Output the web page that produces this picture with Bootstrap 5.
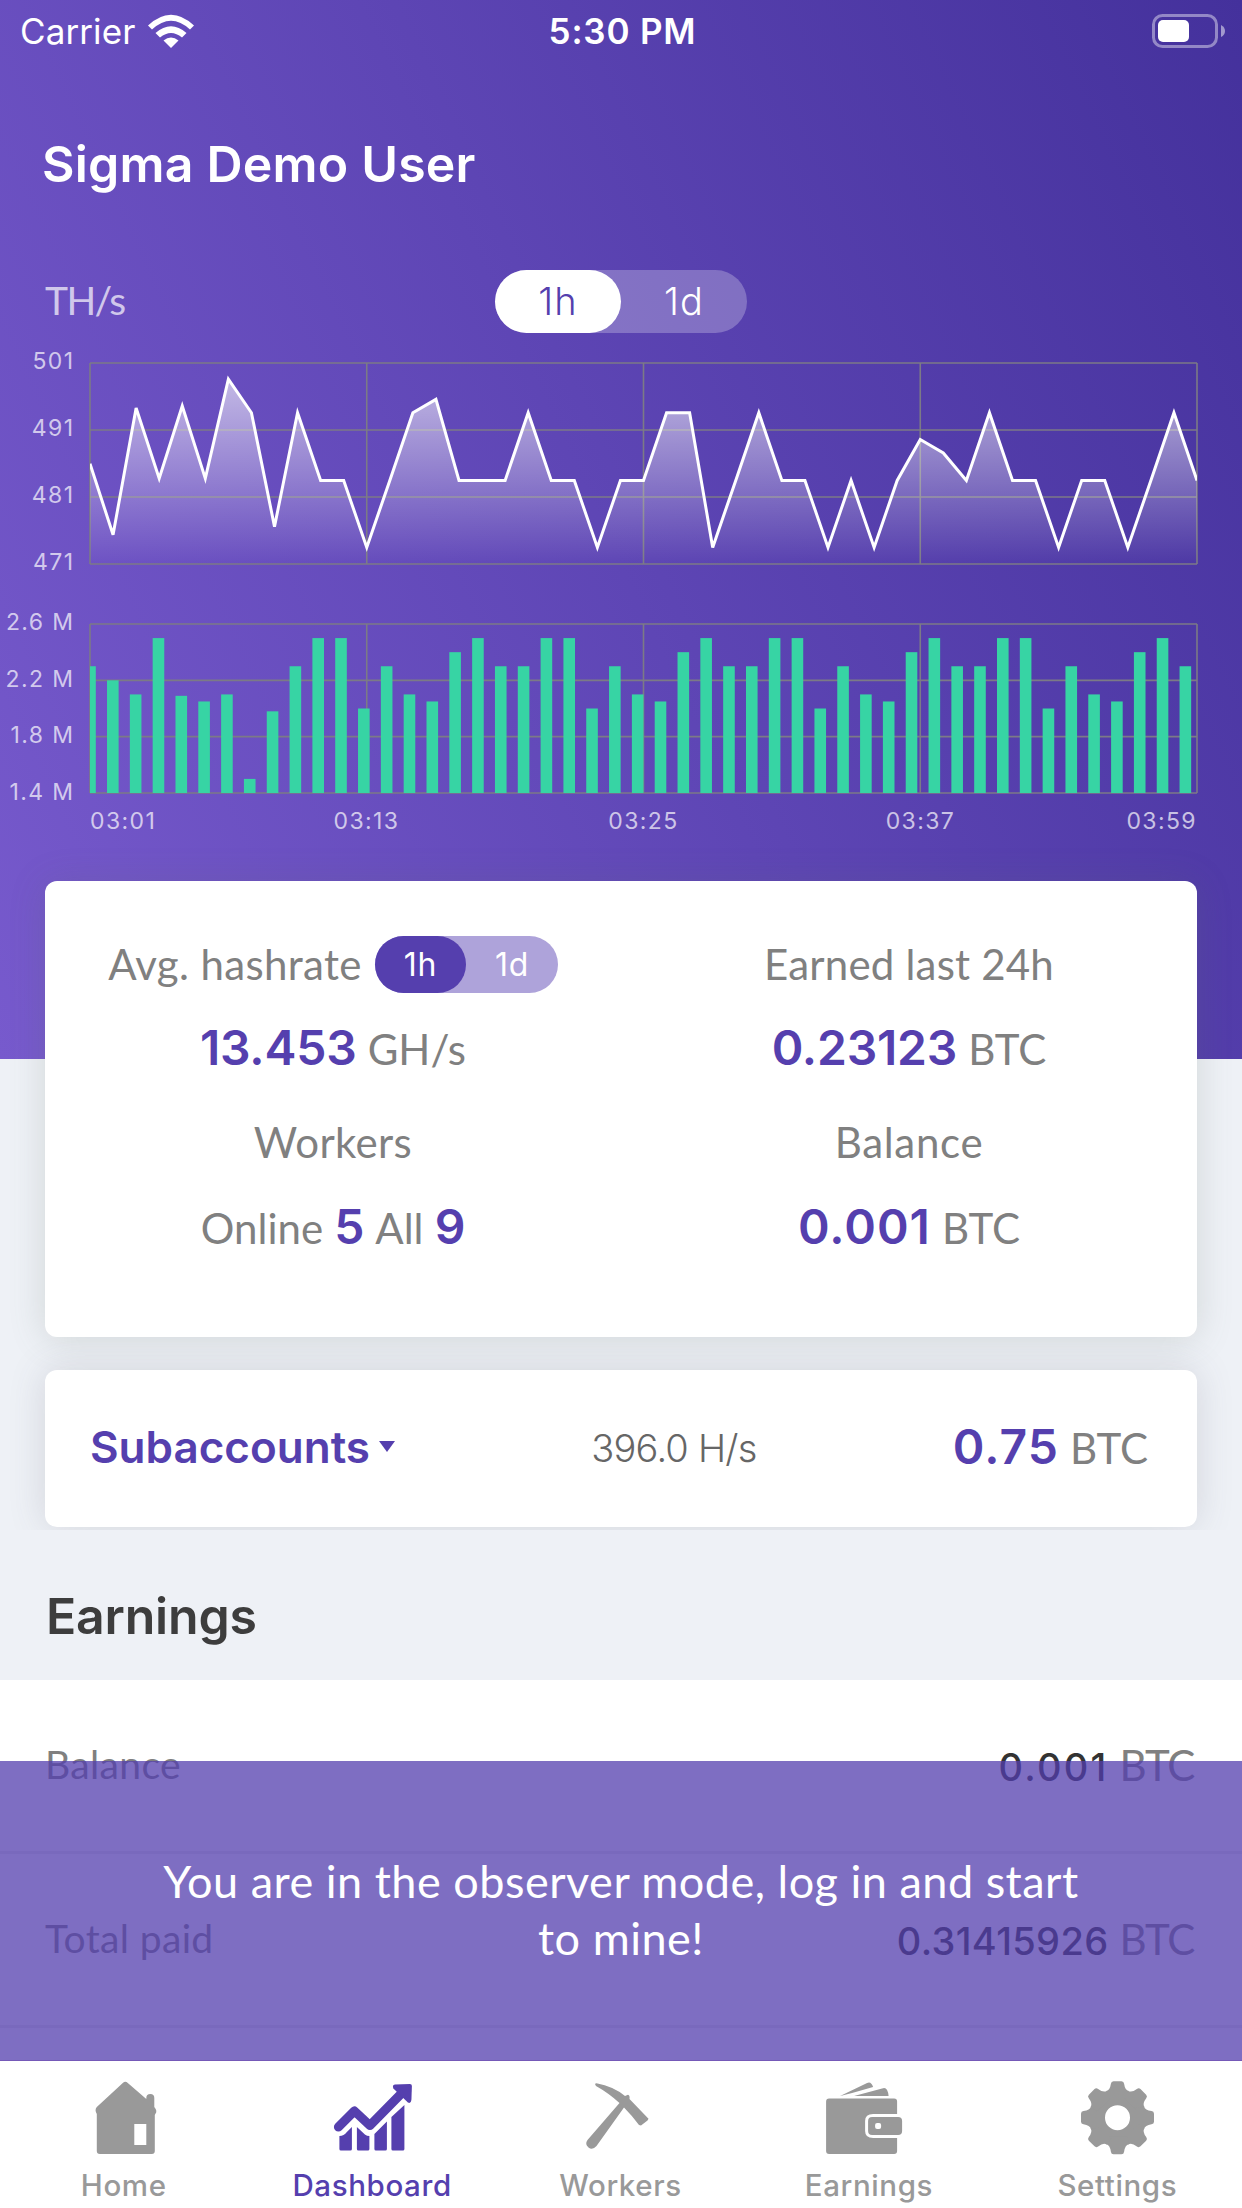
<!DOCTYPE html>
<html lang="en">
<head>
<meta charset="utf-8">
<meta name="viewport" content="width=device-width, initial-scale=1">
<title>Dashboard</title>
<link href="https://cdn.jsdelivr.net/npm/bootstrap@5.3.0/dist/css/bootstrap.min.css" rel="stylesheet">
<style>
  :root { --brand:#553fae; --muted:#808080; }
  html, body { height:2208px; overflow:hidden; }
  body { background:#eef1f6; font-family:Lato, sans-serif; color:var(--muted); font-size:42px; line-height:60px; letter-spacing:.35px; }
  .sf { font-family:Inter, sans-serif; }

  .hero { height:1059px; background:linear-gradient(65deg,#775acd,#44319c); }
  .statusbar { height:62px; padding:0 17px 0 20px; font-size:35px; line-height:62px; }
  .carrier { letter-spacing:.1px; margin-right:12px; }
  .clock { font-weight:600; letter-spacing:.8px; }
  .user-title { margin:67px 0 0 42px; font:600 50px/70px Inter, sans-serif; letter-spacing:.2px; }
  .chart-head { margin-top:71px; height:63px; padding:0 45px; }
  .unit { font-size:39px; line-height:60px; letter-spacing:-1.6px; color:rgba(255,255,255,.7); }
  .seg { border-radius:50rem; display:flex; font-family:Inter, sans-serif; }
  .seg span { flex:1; border-radius:50rem; text-align:center; }
  .seg-lg { width:252px; height:63px; background:rgba(255,255,255,.25); font-size:38px; line-height:63px; letter-spacing:1px; font-weight:350; }
  .seg-lg .on { background:#fff; color:var(--brand); }
  .seg-sm { width:183px; height:57px; background:#aea3da; color:#fff; font-size:32px; line-height:57px; letter-spacing:.8px; margin-left:13px; }
  .seg-sm .on { background:var(--brand); }
  .charts { display:block; margin-top:7px; }
  .charts text { font:400 23px Inter, sans-serif; letter-spacing:1.4px; fill:#fff; fill-opacity:.7; }

  .panel { margin:0 45px; background:#fff; border-radius:12px; position:relative; }
  .stats { height:456px; margin-top:-178px; padding-top:55px; box-shadow:0 2px 36px rgba(95,110,100,.2); }
  .num { font:600 48px/60px Inter, sans-serif; color:var(--brand); letter-spacing:-.2px; }
  .num.airy { letter-spacing:1px; }
  .suffix { line-height:1; letter-spacing:0; }
  .head-row { height:57px; }
  .head-row .lbl { margin-top:-2px; }
  .val { height:60px; margin-top:25px; }
  .lbl2 { margin-top:34px; }
  .val2 { height:60px; margin-top:25px; }
  .wide { letter-spacing:.7px; }
  .tight { letter-spacing:.2px; }

  .subs { height:157px; margin-top:33px; padding:0 49px 2px 45px; box-shadow:0 0 36px rgba(80,80,95,.17); clip-path:inset(-33px -60px -3px -60px); }
  .subs-name { font:600 44px/60px Inter, sans-serif; color:var(--brand); letter-spacing:0; margin-bottom:2px; }
  .caret-tri { border:8px solid transparent; border-top:11px solid var(--brand); border-bottom:0; margin-left:9px; }
  .rate { font:350 38px/60px Inter, sans-serif; color:#666; letter-spacing:-.8px; }

  .sec-title { height:153px; padding:59px 46px 0; margin:0; font:600 50px/60px Inter, sans-serif; letter-spacing:-.2px; color:#3d3d3d; }
  .erow { height:174px; padding:0 48px 0 45px; background:#fff; border-bottom:3px solid #ececec; }
  .erow-name { font-size:39px; padding-bottom:4px; }
  .erow-val { padding-top:1px; }
  .erow-val b { font:500 38px/60px Inter, sans-serif; color:#333; }
  .erow-val b.airy { letter-spacing:2.2px; }
  .erow-val .suffix { letter-spacing:-1.2px; }

  .observer { top:1761px; height:300px; padding:92px 150px 0; background:rgba(83,61,174,.75); border-bottom:1px solid #7559b8; color:#fff; font-size:45px; line-height:57px; letter-spacing:.5px; }
  .tabs { height:147px; background:#fff; color:#999; padding-top:15px; font:500 29.5px/36px Inter, sans-serif; letter-spacing:.6px; }
  .tabs .col { padding-right:1px; }
  .tabs svg { display:block; margin:0 auto 11px; fill:currentColor; }
  .tabs .current { color:var(--brand); }
</style>
</head>
<body>
<header class="hero text-white">
  <div class="statusbar sf row gx-0">
    <div class="col d-flex align-items-center">
      <span class="carrier">Carrier</span>
      <svg width="48" height="36" viewBox="148 12 48 36" fill="#fff">
        <path d="M149 24.5Q172 3 195 24.5L191 28.500Q172 11 153 28.500Z"/>
        <path d="M156.500 32Q172 18.500 187.500 32L183 36.500Q172 27.500 161 36.500Z"/>
        <path d="M164.500 39.500Q172 33.500 179.500 39.500L172 47Z"/>
      </svg>
    </div>
    <div class="col-auto text-center clock">5:30 PM</div>
    <div class="col d-flex align-items-center justify-content-end">
      <svg width="74" height="36" viewBox="1152 12 74 36">
        <rect x="1154.500" y="14.500" width="63" height="31" rx="9" fill="none" stroke="#fff" stroke-opacity=".42" stroke-width="3"/>
        <rect x="1159" y="19" width="31" height="22" rx="5" fill="#fff"/>
        <path d="M1222 24Q1226 26 1226 30T1222 36Z" fill="#fff" fill-opacity=".5"/>
      </svg>
    </div>
  </div>
  <h1 class="user-title">Sigma Demo User</h1>
  <div class="chart-head row gx-0">
    <div class="col unit">TH/s</div>
    <div class="col-auto"><div class="seg seg-lg"><span class="on">1h</span><span>1d</span></div></div>
    <div class="col"></div>
  </div>
  <svg class="charts" id="charts" width="1242" height="510" viewBox="0 340 1242 510">
    <defs><linearGradient id="fade" gradientUnits="userSpaceOnUse" x1="0" y1="363" x2="0" y2="564">
      <stop offset="0" stop-color="#fff" stop-opacity=".66"/><stop offset="1" stop-color="#fff" stop-opacity="0"/></linearGradient>
      <clipPath id="plot"><rect x="90" y="340" width="1107" height="510"/></clipPath></defs>
    <g id="grid" fill="none" stroke="#7c7a86" stroke-width="1.600"></g>
    <g clip-path="url(#plot)">
      <path id="area" fill="url(#fade)"/>
      <path id="line" fill="none" stroke="#fff" stroke-width="3"/>
      <g id="bars" fill="#37d4a4"></g>
    </g>
    <g id="labels"></g>
  </svg>
</header>

<section class="panel stats">
  <div class="row gx-0 text-center">
    <div class="col-6">
      <div class="head-row d-flex justify-content-center align-items-center">
        <span class="lbl">Avg. hashrate</span>
        <div class="seg seg-sm"><span class="on">1h</span><span>1d</span></div>
      </div>
      <div class="val"><span class="num">13.453</span> <span class="suffix">GH/s</span></div>
      <div class="lbl2">Workers</div>
      <div class="val2"><span class="suffix">Online</span> <span class="num">5</span> <span class="suffix">All</span> <span class="num">9</span></div>
    </div>
    <div class="col-6">
      <div class="head-row d-flex justify-content-center align-items-center"><span class="lbl tight">Earned last 24h</span></div>
      <div class="val"><span class="num">0.23123</span> <span class="suffix">BTC</span></div>
      <div class="lbl2 wide">Balance</div>
      <div class="val2"><span class="num airy">0.001</span> <span class="suffix">BTC</span></div>
    </div>
  </div>
</section>

<section class="panel subs d-flex align-items-center justify-content-between">
  <div class="subs-name d-flex align-items-center">Subaccounts<span class="caret-tri"></span></div>
  <div class="rate">396.0 H/s</div>
  <div><span class="num airy">0.75</span> <span class="suffix">BTC</span></div>
</section>

<h2 class="sec-title">Earnings</h2>
<div class="erow d-flex align-items-center justify-content-between">
  <span class="erow-name">Balance</span><span class="erow-val"><b class="airy">0.001</b> <span class="suffix">BTC</span></span>
</div>
<div class="erow d-flex align-items-center justify-content-between">
  <span class="erow-name">Total paid</span><span class="erow-val"><b>0.31415926</b> <span class="suffix">BTC</span></span>
</div>
<div class="erow"></div>

<div class="observer position-absolute start-0 end-0 text-center">You are in the observer mode, log in and start to mine!</div>

<nav class="tabs fixed-bottom row gx-0 text-center">
  <div class="col">
    <svg width="80" height="80" viewBox="83.700 2076 80 80">
      <path fill-rule="evenodd" d="M122.500 2083Q125 2080.500 127.500 2083L146 2099V2098Q146 2094 150 2094T154 2098V2107Q157.500 2111 155 2114L154.500 2115V2151Q154.500 2154 151.500 2154H99.500Q96.500 2154 96.500 2151V2114Q94 2110 96.500 2107ZM134 2124V2145H146V2124Z"/>
    </svg>Home
  </div>
  <div class="col current">
    <svg width="80" height="80" viewBox="332.100 2076 80 80">
      <path d="M339.500 2136Q344 2136 347 2132L352 2127V2149Q352 2150.500 350.500 2150.500H341Q339.500 2150.500 339.500 2149ZM357 2127L365 2134.500Q367 2136 369.500 2136V2149Q369.500 2150.500 368 2150.500H358.500Q357 2150.500 357 2149ZM374.500 2134L387 2121.500V2149Q387 2150.500 385.500 2150.500H376Q374.500 2150.500 374.500 2149ZM391.500 2117L404.500 2105V2149Q404.500 2150.500 403 2150.500H393Q391.500 2150.500 391.500 2149Z"/>
      <path d="M338.500 2127L354.500 2111L370 2125.500L402 2093" fill="none" stroke="currentColor" stroke-width="9" stroke-linecap="round" stroke-linejoin="round"/>
      <path d="M395 2084.500L410 2084Q412 2084 412 2086L411.500 2100Q411 2104 408 2102.500L393.500 2088.500Q392 2085 395 2084.500Z"/>
    </svg>Dashboard
  </div>
  <div class="col">
    <svg width="80" height="80" viewBox="580.500 2076 80 80">
      <path d="M596 2083.300Q613 2086.500 624.500 2096L627.500 2094.700Q629.500 2095 629 2099L648 2118.700L647 2120.500L640.500 2125.500L638.500 2125Q631 2115 623.500 2107.500L596 2146Q592 2150.500 588 2147.500Q584 2144 587 2140L619 2103Q608 2093 595.500 2086Q593.500 2083.500 596 2083.300Z"/>
    </svg>Workers
  </div>
  <div class="col">
    <svg width="80" height="80" viewBox="828.900 2076 80 80" overflow="visible">
      <path d="M840 2096L867 2083Q871 2081 873 2087L852 2093ZM854 2096L882 2088.500Q887.500 2086 888.500 2096Z"/>
      <path d="M829 2098.500H894Q897 2098.500 897 2101.500V2114H873Q865 2114 865 2121V2131Q865 2138 873 2138H897V2151Q897 2154 894 2154H829Q826 2154 826 2151V2101.500Q826 2098.500 829 2098.500Z"/>
      <path fill-rule="evenodd" d="M872 2117H898Q902 2117 902 2121V2131Q902 2135 898 2135H872Q868 2135 868 2131V2121Q868 2117 872 2117ZM877 2123Q875 2123 875 2125V2127Q875 2129 877 2129H879Q881 2129 881 2127V2125Q881 2123 879 2123Z"/>
    </svg>Earnings
  </div>
  <div class="col">
    <svg width="80" height="80" viewBox="-40.500 -41.700 80 80">
      <defs><path id="cog" d="M-11.300-26.600Q-7.500-27.500-6.600-34Q-6.300-36.500-4-36.500H4Q6.300-36.500 6.600-34Q7.500-27.500 11.300-26.600L10-19H-10Z"/></defs>
      <circle r="20.200" fill="none" stroke="currentColor" stroke-width="15.400"/>
      <use href="#cog"/><use href="#cog" transform="rotate(45)"/><use href="#cog" transform="rotate(90)"/><use href="#cog" transform="rotate(135)"/>
      <use href="#cog" transform="rotate(180)"/><use href="#cog" transform="rotate(225)"/><use href="#cog" transform="rotate(270)"/><use href="#cog" transform="rotate(315)"/>
    </svg>Settings
  </div>
</nav>

<script src="https://cdn.jsdelivr.net/npm/bootstrap@5.3.0/dist/js/bootstrap.bundle.min.js"></script>
<script>
  const L = 90, R = 1197;
  // hashrate samples, TH/s
  const rate = [485.9,475.3,494.2,483.700,494.5,483.700,498.5,493.5,476.5,493.5,483.400,483.400,473.400,483.400,493.5,495.5,483.400,483.400,483.400,493.5,483.400,483.400,473.400,483.400,483.400,493.5,493.5,473.400,483.400,493.5,483.400,483.400,473.400,483.400,473.400,483.400,489.5,487.5,483.400,493.5,483.400,483.400,473.400,483.400,483.400,473.400,483.400,493.5,483.400];
  // shares, millions
  const shares = [2.3,2.2,2.1,2.5,2.09,2.05,2.1,1.5,1.98,2.3,2.5,2.5,2,2.3,2.1,2.05,2.4,2.5,2.3,2.3,2.5,2.5,2,2.3,2.1,2.05,2.4,2.5,2.3,2.3,2.5,2.5,2,2.3,2.1,2.05,2.4,2.5,2.3,2.3,2.5,2.5,2,2.3,2.1,2.05,2.4,2.5,2.3];
  const yRate = v => 563.5 - (v - 471) * 6.7;
  const yShare = v => 793 - (v - 1.4) * 140.83;
  const el = id => document.getElementById(id);
  let grid = '';
  for (const [top, bottom] of [[363, 564], [624, 793]]) {
    for (let i = 0; i < 4; i++) { const y = top + (bottom - top) * i / 3; grid += `M${L} ${y}H${R}`; }
    for (let i = 0; i < 5; i++) { const x = L + (R - L) * i / 4; grid += `M${x} ${top}V${bottom}`; }
  }
  el('grid').innerHTML = `<path d="${grid}"/>`;
  const pts = rate.map((v, i) => `${L + (R - L) * i / 48} ${yRate(v)}`).join('L');
  el('line').setAttribute('d', 'M' + pts);
  el('area').setAttribute('d', `M${pts}L${R} 564L${L} 564Z`);
  el('bars').innerHTML = shares.map((v, i) => `<rect x="${L + i * 22.82 - 5.8}" y="${yShare(v)}" width="11.600" height="${793 - yShare(v)}"/>`).join('');
  const label = (t, x, y, a) => `<text x="${x}" y="${y}" text-anchor="${a}">${t}</text>`;
  el('labels').innerHTML =
    ['501', '491', '481', '471'].map((t, i) => label(t, 74.5, 369 + i * 67, 'end')).join('') +
    ['2.6 M', '2.2 M', '1.8 M', '1.4 M'].map((t, i) => label(t, 74.5, 630 + i * 56.5, 'end')).join('') +
    label('03:01', 90, 829, 'start') + label('03:13', 366.5, 829, 'middle') + label('03:25', 643.5, 829, 'middle') +
    label('03:37', 920.5, 829, 'middle') + label('03:59', 1197, 829, 'end');
</script>
</body>
</html>
